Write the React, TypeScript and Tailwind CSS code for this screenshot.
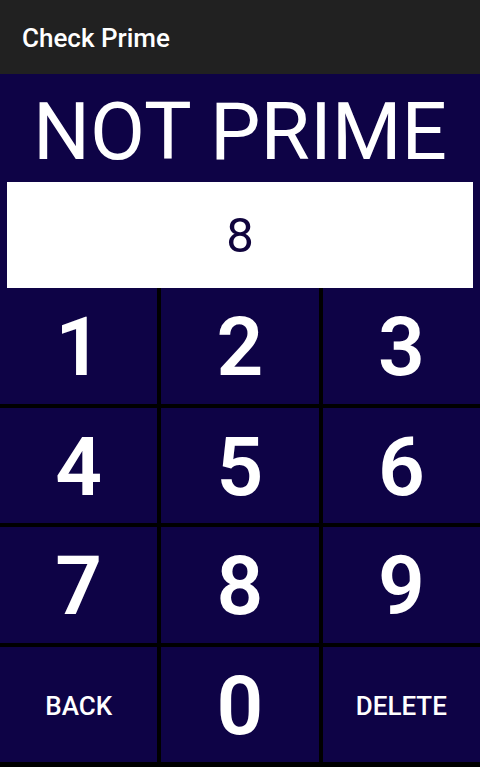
import React from "react";

const keys = ["1", "2", "3", "4", "5", "6", "7", "8", "9", "BACK", "0", "DELETE"];

export default function App() {
  return (
    <div
      className="w-[480px] h-[767px] flex flex-col bg-[#0e0346] overflow-hidden"
      style={{ fontFamily: "Roboto, 'Noto Sans', sans-serif" }}
    >
      <div className="h-[74px] shrink-0 bg-[#212121] flex items-center px-[22px]">
        <span className="text-white text-[26px] font-medium leading-none pt-[1px]">Check Prime</span>
      </div>
      <div className="h-[108px] shrink-0 flex items-center justify-center pt-[8px]">
        <span className="text-white text-[80px] leading-none">NOT PRIME</span>
      </div>
      <div className="h-[106px] shrink-0 mx-[7px] bg-white flex items-center justify-center">
        <span className="text-[#10043d] text-[49px] leading-none">8</span>
      </div>
      <div className="flex-1 bg-black grid grid-cols-3 grid-rows-4 gap-x-[4px] gap-y-[4px] pb-[5px]">
        {keys.map((k) => {
          const word = k.length > 1;
          return (
            <div key={k} className="bg-[#0e0346] flex items-center justify-center">
              <span
                className={
                  word
                    ? "text-white text-[26px] font-medium leading-none pt-[4px]"
                    : "text-white text-[82px] font-semibold leading-none pt-[3px]"
                }
              >
                {k}
              </span>
            </div>
          );
        })}
      </div>
    </div>
  );
}
